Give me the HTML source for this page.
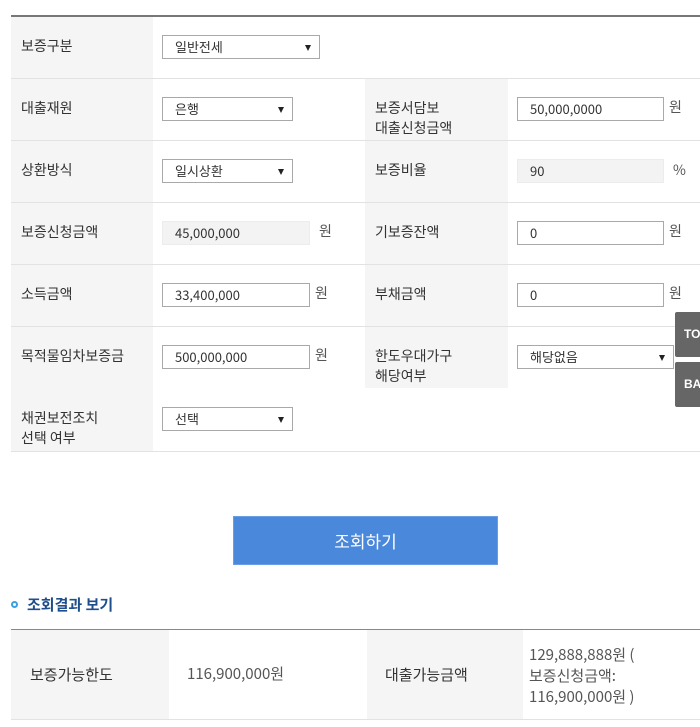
<!DOCTYPE html>
<html><head><meta charset="utf-8"><style>
*{margin:0;padding:0;box-sizing:border-box}
body{width:700px;height:727px;background:#fff;position:relative;overflow:hidden;font-family:"Noto Sans CJK KR","Liberation Sans",sans-serif;color:#333;font-size:14px}
.a{position:absolute}
.lb{position:absolute;background:#f5f5f5}
.hl{position:absolute;left:11px;right:0;height:1px;background:#e2e2e2}
.t{position:absolute;font-size:14px;line-height:20px;color:#333}
.sel,.inp,.ro{position:absolute;height:24px;border:1px solid #a9a9a9;background:#fff;font-size:13px;line-height:22px;padding-left:12px;color:#333}
.ro{border:1px solid #ececec;background:#f3f3f3}
.sel:after{content:"";position:absolute;right:8px;top:9px;border-left:3.5px solid transparent;border-right:3.5px solid transparent;border-top:6px solid #222}
.w{position:absolute;font-size:14px;color:#555;line-height:20px}
.fb{position:absolute;left:675px;width:30px;height:45px;background:#666;color:#fff;font-weight:bold;font-size:12px;line-height:45px;padding-left:9px;border-radius:2px 0 0 2px;font-family:"Liberation Sans",sans-serif}
</style></head><body>
<div class="a" style="left:11px;right:0;top:15px;height:2px;background:#777"></div>
<div class="lb" style="left:11px;top:17px;width:142px;height:434px"></div>
<div class="lb" style="left:365px;top:79px;width:143px;height:309px"></div>
<div class="hl" style="top:78px"></div>
<div class="hl" style="top:140px"></div>
<div class="hl" style="top:202px"></div>
<div class="hl" style="top:264px"></div>
<div class="hl" style="top:326px"></div>
<div class="hl" style="top:451px"></div>

<div class="t" style="left:21px;top:36px">보증구분</div>
<div class="sel" style="left:162px;top:35px;width:158px">일반전세</div>

<div class="t" style="left:21px;top:98px">대출재원</div>
<div class="sel" style="left:162px;top:97px;width:131px">은행</div>
<div class="t" style="left:375px;top:98px">보증서담보<br>대출신청금액</div>
<div class="inp" style="left:517px;top:97px;width:147px">50,000,0000</div>
<div class="w" style="left:669px;top:97px">원</div>

<div class="t" style="left:21px;top:160px">상환방식</div>
<div class="sel" style="left:162px;top:159px;width:131px">일시상환</div>
<div class="t" style="left:375px;top:160px">보증비율</div>
<div class="ro" style="left:517px;top:159px;width:147px">90</div>
<div class="w" style="left:673px;top:160px">%</div>

<div class="t" style="left:21px;top:222px">보증신청금액</div>
<div class="ro" style="left:162px;top:221px;width:148px">45,000,000</div>
<div class="w" style="left:319px;top:221px">원</div>
<div class="t" style="left:375px;top:222px">기보증잔액</div>
<div class="inp" style="left:517px;top:221px;width:147px">0</div>
<div class="w" style="left:669px;top:221px">원</div>

<div class="t" style="left:21px;top:284px">소득금액</div>
<div class="inp" style="left:162px;top:283px;width:148px">33,400,000</div>
<div class="w" style="left:315px;top:283px">원</div>
<div class="t" style="left:375px;top:284px">부채금액</div>
<div class="inp" style="left:517px;top:283px;width:147px">0</div>
<div class="w" style="left:669px;top:283px">원</div>

<div class="t" style="left:21px;top:346px">목적물임차보증금</div>
<div class="inp" style="left:162px;top:345px;width:148px">500,000,000</div>
<div class="w" style="left:315px;top:345px">원</div>
<div class="t" style="left:375px;top:346px">한도우대가구<br>해당여부</div>
<div class="sel" style="left:517px;top:345px;width:157px">해당없음</div>

<div class="t" style="left:21px;top:408px">채권보전조치<br>선택 여부</div>
<div class="sel" style="left:162px;top:407px;width:131px">선택</div>

<div class="fb" style="top:312px">TOP</div>
<div class="fb" style="top:362px">BACK</div>

<div class="a" style="left:233px;top:516px;width:265px;height:49px;background:#4a88dc;border:1px solid #6a9ee4;color:#fff;font-size:17px;line-height:47px;text-align:center">조회하기</div>

<div class="a" style="left:11px;top:601px;width:7px;height:7px;border:2px solid #3aa0e0;border-radius:50%"></div>
<div class="a" style="left:27px;top:595px;font-size:15px;font-weight:bold;color:#1f4e8c;line-height:20px">조회결과 보기</div>

<div class="a" style="left:11px;right:0;top:629px;height:1px;background:#888"></div>
<div class="lb" style="left:11px;top:630px;width:158px;height:89px"></div>
<div class="lb" style="left:367px;top:630px;width:156px;height:89px"></div>
<div class="hl" style="top:719px"></div>
<div class="t" style="left:30px;top:665px;font-size:15px">보증가능한도</div>
<div class="t" style="left:187px;top:664px;font-size:15px;color:#555">116,900,000원</div>
<div class="t" style="left:385px;top:665px;font-size:15px">대출가능금액</div>
<div class="t" style="left:529px;top:644px;font-size:15px;line-height:21px;color:#555">129,888,888원 (<br>보증신청금액:<br>116,900,000원 )</div>
</body></html>
